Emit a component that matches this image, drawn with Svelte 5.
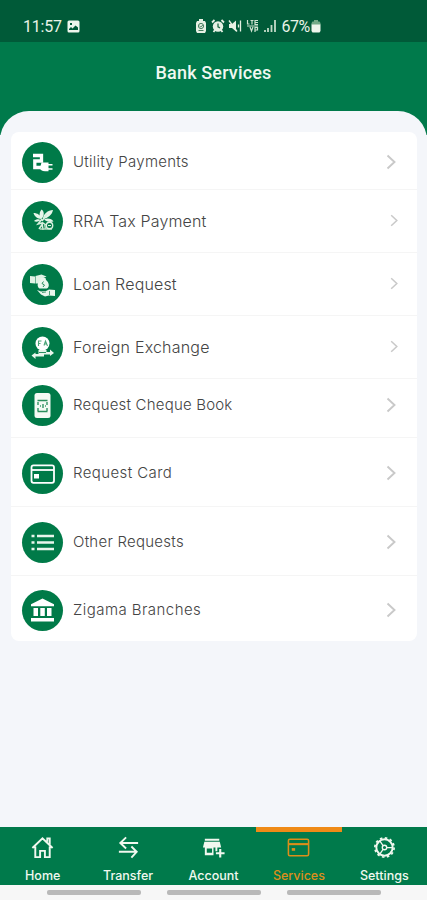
<script>
  // Rows of the services list; height and pad follow the rhythm of each entry
  const services = [
    { icon: 'utility', label: 'Utility Payments', height: 58, pad: 10, size: 15, tracking: 0.25 },
    { icon: 'tax', label: 'RRA Tax Payment', height: 63, pad: 11, size: 16, tracking: 0.15, small: true },
    { icon: 'loan', label: 'Loan Request', height: 63, pad: 11, size: 16, tracking: 0.15, small: true },
    { icon: 'exchange', label: 'Foreign Exchange', height: 63, pad: 11, size: 16, tracking: 0.2, small: true },
    { icon: 'cheque', label: 'Request Cheque Book', height: 59, pad: 6, size: 15, tracking: 0.2 },
    { icon: 'card', label: 'Request Card', height: 69, pad: 15, size: 15, tracking: 0.4 },
    { icon: 'list', label: 'Other Requests', height: 69, pad: 15, size: 15, tracking: 0.25 },
    { icon: 'bank', label: 'Zigama Branches', height: 65, pad: 14, size: 15, tracking: 0.45 }
  ];

  const tabs = ['Home', 'Transfer', 'Account', 'Services', 'Settings'];
  let active = $state('Services');
</script>

<div class="screen">
  <div class="status">
    <span class="time">11:57</span>
    <svg class="photo" width="13" height="13" viewBox="0 0 13 13">
      <path fill="#eef6ec" fill-rule="evenodd" d="M2 .5h9A1.5 1.5 0 0 1 12.500 2v9a1.500 1.500 0 0 1-1.500 1.500H2A1.500 1.500 0 0 1 .5 11V2A1.500 1.500 0 0 1 2 .5zM2 10h9V7.500L8.500 5.500 5.500 8.500 4 7 2 9zM3 3v2h2V3z" />
    </svg>
    <div class="indicators">
      <svg width="12" height="14" viewBox="0 0 12 14">
        <path fill="#e6f0e3" d="M4 0h4v2h2l1 2v8l-1 2H2l-1-2V4l1-2h2z" />
        <circle cx="6" cy="7" r="2.600" fill="none" stroke="#447c5d" />
        <path d="M3.500 11.500h5M4.500 7l1.300 1 2-2" fill="none" stroke="#447c5d" />
      </svg>
      <svg width="14" height="14" viewBox="0 0 14 14">
        <circle cx="7" cy="7.500" r="5.200" fill="#e6f0e3" />
        <path d="M1 3.500L3.500 1M13 3.500L10.500 1M2.500 13l1.500-2M11.500 13L10 11" stroke="#e6f0e3" stroke-width="1.800" />
        <path d="M7 4.500v3.300l2 1" fill="none" stroke="#1e6844" stroke-width="1.300" />
      </svg>
      <svg width="14" height="14" viewBox="0 0 14 14">
        <path d="M1 5h3l4-3.500v11L4 9H1z" fill="#e6f0e3" />
        <path d="M1 1.500l8 11M12.500 1.500v11M10.500 5.500v3" stroke="#e6f0e3" stroke-width="1.300" />
      </svg>
      <svg width="14" height="14" viewBox="0 0 14 14">
        <path d="M1.500 1v4h2M4.500 1.500h3M6 1.500v4M12 1.500H9v4h3M9 3.500h3M1 7h11M4 8l1.500 4L7 8M9 13V8.500h2.500V11H9" fill="none" stroke="#d0e3d1" stroke-width="1.200" />
      </svg>
      <svg width="14" height="14" viewBox="0 0 14 14">
        <path d="M2 11v2M5 9v4M8.500 6v7M12 1v12" stroke="#c3dac7" stroke-width="1.800" />
      </svg>
      <span class="percent">67%</span>
      <svg class="battery" width="10" height="13" viewBox="0 0 10 13">
        <path d="M3 0h4v1.500h1.500L9.500 3v2H.5V3l1-1.500H3z" fill="#73ab87" />
        <path d="M.5 4.500h9V11L8.500 12.500h-7L.5 11z" fill="#eef6ec" />
      </svg>
    </div>
  </div>

  <header>
    <h1>Bank Services</h1>
  </header>

  <main>
    <div class="panel">
      <ul class="card">
        {#each services as item}
          <li style:height="{item.height}px" style:padding-top="{item.pad}px">
            <span class="badge">
              {#if item.icon === 'utility'}
                <svg viewBox="0 0 41 41">
                  <path d="M11 13.500h8.500v5.500H12.800v6.500h9" fill="none" stroke="#fff" stroke-width="3.300" />
                  <path d="M19.500 20.500h7v1.500h4v1.500h-4v2.800h4v1.500h-4v1.400h-3.500c-3 0-5-1.200-5-3.500z" fill="#fff" />
                </svg>
              {:else if item.icon === 'tax'}
                <svg viewBox="0 0 41 41">
                  <path d="M19.500 18c-3-3-2-7 0-9.500 3 2 3 6 0 9.500zM21 18c0-5 5-9 10-9-1 5-5 8-10 9zM19 18c-3 0-7-3-7.500-6 4 0 7 2 7.500 6zM18.500 19c-2 2-5 2-6.500 1 2-2 5-2 6.500-1zM22 18.500c3-2 8-1 9.500 2-4 1-7 0-9.500-2z" fill="#e6f5e9" />
                  <path d="M20 18l-4 5 4-1 1 7M17 28l4-6 3 2M25 13l-5 7" fill="none" stroke="#d8f0de" stroke-width="1.500" />
                  <path d="M18 28h12M22.500 23l1 5" fill="none" stroke="#b5dcc2" stroke-width="1.300" />
                  <circle cx="27.500" cy="24.500" r="3.200" fill="none" stroke="#d8f0de" stroke-width="1.400" />
                  <path d="M26 24.500h3" stroke="#d8f0de" />
                </svg>
              {:else if item.icon === 'loan'}
                <svg viewBox="0 0 41 41">
                  <path d="M8 12l5 .5v7L8 19zM13.500 12l6-1.500 5 2-4 2-3 5h-4z" fill="#e0f2e5" />
                  <path d="M18.500 14h5l.5 2c3 2 4 7 1 8.500h-7.500c-3-2-2-6.500 1-8.500z" fill="#e9f6ec" />
                  <path d="M21.500 17.500l-1.500 2 2.500 1.500-1.500 2" fill="none" stroke="#268a5b" />
                  <path d="M15 26l4 1.500 5-.5 3-1.500 6 .5v6l-6-.5-4 1-4-2z" fill="#e9f6ec" />
                  <path d="M20 28.500l4-.5M27.500 27v4" stroke="#268a5b" stroke-width=".8" />
                </svg>
              {:else if item.icon === 'exchange'}
                <svg viewBox="0 0 41 41">
                  <circle cx="20.500" cy="16.500" r="7" fill="#fff" />
                  <path d="M19.500 14h-3v5M16.500 16.500h2M22 18.500l1.500-4.500 2 5M22.500 17h2.500" fill="none" stroke="#4ba478" stroke-width="1.100" />
                  <path d="M16.500 23h8v2H28v-2.500l4 3.500-4 3v-1.500h-6v2h-8.500V32l-4-3.500 4-3V27h3z" fill="#e9f6ec" />
                  <path d="M17 25.500h7" stroke="#2b8f60" />
                </svg>
              {:else if item.icon === 'cheque'}
                <svg viewBox="0 0 41 41">
                  <rect x="12.500" y="8" width="16" height="25" rx="2.500" fill="#f4faf4" />
                  <path d="M15.500 15.500h10M15.500 26.500h10" stroke="#2a8e5c" stroke-width="1.500" />
                  <path d="M16 17v3M25 17v3M16 23v3M25 23v3M18 21h1M21 19v4M23 21h1" stroke="#3d9b6c" stroke-width="1.500" />
                </svg>
              {:else if item.icon === 'card'}
                <svg viewBox="0 0 41 41">
                  <rect x="9.500" y="12.300" width="22.500" height="17.500" rx="2" fill="none" stroke="#fff" stroke-width="1.800" />
                  <path d="M10 17h22" stroke="#fff" stroke-width="1.800" />
                  <rect x="12" y="21" width="5" height="4.500" fill="#fff" />
                </svg>
              {:else if item.icon === 'list'}
                <svg viewBox="0 0 41 41">
                  <path d="M9.500 14h3M9.500 20.500h3M9.500 27h3M15 14h17M15 20.500h17M15 27h17" stroke="#e9f6ec" stroke-width="2.400" />
                </svg>
              {:else}
                <svg viewBox="0 0 41 41">
                  <path d="M20.500 8.500l11.500 5.800v2H9v-2zM11.500 18h4.500v8h-4.500zM18.300 18h4.500v8h-4.500zM25 18h4.500v8H25zM9 28h23v3.500H9z" fill="#fff" />
                </svg>
              {/if}
            </span>
            <span class="label" style:font-size="{item.size}px" style:letter-spacing="{item.tracking}px">{item.label}</span>
            <svg class="chevron" class:small={item.small} viewBox="0 0 10 16">
              <path d="M1.500 1.500L8.500 8l-7 6.500" fill="none" stroke="#c9c9c9" stroke-width="1.900" />
            </svg>
          </li>
        {/each}
      </ul>
    </div>
  </main>

  <nav>
    {#each tabs as tab}
      <button class:active={active === tab} onclick={() => (active = tab)}>
        <svg width="25" height="25" viewBox="0 0 26 26" fill="none" stroke="currentColor" stroke-width="2">
          {#if tab === 'Home'}
            <path d="M2.500 13.500L13 3.500l10.500 10M5.500 12v11h5v-6.500h5V23h5V12M18 7V3.500h2.500V10" />
          {:else if tab === 'Transfer'}
            <path d="M23 8.300H5M10.500 2.500L4.500 8.300l6 5.700M3 17.500h18.500M16 12l5.500 5.500-5.500 6" />
          {:else if tab === 'Account'}
            <path d="M4 4h15v2H4zM3.500 7h16l1.500 6h-4v4h-2v-4h-2v8H4v-8H2zM6 14v4.500h5.500V14z" fill="currentColor" fill-rule="evenodd" stroke="none" />
            <path d="M20 14.500v9M15.500 19h9" stroke-width="2.200" />
          {:else if tab === 'Services'}
            <rect x="2.500" y="4.500" width="21" height="17" rx="1.500" stroke-width="1.600" />
            <path d="M3 9.500h20" stroke-width="2.200" />
            <path d="M6 15h3.500" stroke-width="2.800" />
          {:else}
            <circle cx="13" cy="13" r="8.500" stroke-width="2" />
            <circle cx="13" cy="13" r="10" stroke-width="1.800" stroke-dasharray="2.620 2.620" />
            <circle cx="13" cy="13" r="2.300" stroke-width="1.400" />
            <path d="M11.700 11.200L8.300 6.300M11.700 14.800l-3.400 4.900M15.300 13H21" stroke-width="1.300" />
          {/if}
        </svg>
        <span>{tab}</span>
      </button>
    {/each}
  </nav>

  <div class="gestures">
    <i></i><i></i><i></i>
  </div>
</div>

<style>
  :global(body) {
    margin: 0;
  }

  .screen {
    display: flex;
    flex-direction: column;
    height: 900px;
    background: #007a4b;
    font-family: Inter, 'Noto Sans', sans-serif;
    overflow: hidden;
  }

  .status {
    display: flex;
    align-items: center;
    box-sizing: border-box;
    height: 42px;
    padding: 10px 0 0 23px;
    background: #005a38;
    color: #e9f3e7;
    font-family: Roboto, sans-serif;
    font-size: 16px;
  }

  .time {
    width: 38px;
    letter-spacing: -0.2px;
    white-space: nowrap;
  }

  .photo {
    margin-left: 6px;
  }

  .indicators {
    display: flex;
    align-items: center;
    gap: 3.500px;
    margin-left: 115px;
  }

  .percent {
    margin-left: 1px;
    letter-spacing: -0.5px;
  }

  .battery {
    margin-left: -2px;
  }

  header {
    height: 69px;
  }

  h1 {
    margin: 0;
    padding-top: 20px;
    color: #f0f8f1;
    font-family: Roboto, sans-serif;
    font-size: 18px;
    font-weight: 500;
    line-height: 22px;
    letter-spacing: 0.15px;
    text-align: center;
  }

  main {
    flex: 1;
    background: linear-gradient(#007a4b 24px, #f4f6fa 24px);
  }

  .panel {
    box-sizing: border-box;
    height: 100%;
    padding: 21px 10px 0 11px;
    border-radius: 29px 29px 0 0;
    background: #f4f6fa;
  }

  .card {
    margin: 0;
    padding: 0;
    border-radius: 8px;
    background: #fff;
    list-style: none;
  }

  li {
    display: flex;
    align-items: flex-start;
    box-sizing: border-box;
    padding: 0 21px 0 10.500px;
    border-bottom: 1px solid #f5f5f5;
  }

  li:last-child {
    border-bottom: none;
  }

  .badge {
    width: 41px;
    height: 41px;
    border-radius: 50%;
    background: #007a48;
  }

  .badge svg {
    display: block;
  }

  .label {
    flex: 1;
    margin-left: 10.500px;
    color: #444;
    font-weight: 300;
    line-height: 40px;
    white-space: nowrap;
  }

  .chevron {
    width: 10px;
    height: 16px;
    margin-top: 12px;
  }

  .chevron.small {
    width: 8px;
    height: 13px;
    margin: 13px -2px 0 0;
  }

  nav {
    display: flex;
    height: 58px;
    background: #007a4b;
  }

  button {
    display: flex;
    flex: 1;
    flex-direction: column;
    align-items: center;
    box-sizing: border-box;
    padding: 3px 0 0;
    border: 0;
    border-top: 5px solid transparent;
    background: none;
    color: #f1f8ef;
    font: 500 12.500px/16px Inter, sans-serif;
    cursor: pointer;
  }

  button span {
    margin-top: 8px;
  }

  button.active {
    border-top-color: #ef8a17;
    color: #dc8e1a;
  }

  .gestures {
    display: flex;
    justify-content: center;
    gap: 26px;
    height: 10px;
    padding-top: 5px;
    background: #f7f7f7;
  }

  i {
    width: 94px;
    height: 5px;
    border-radius: 2px;
    background: #b9b9b9;
  }
</style>
